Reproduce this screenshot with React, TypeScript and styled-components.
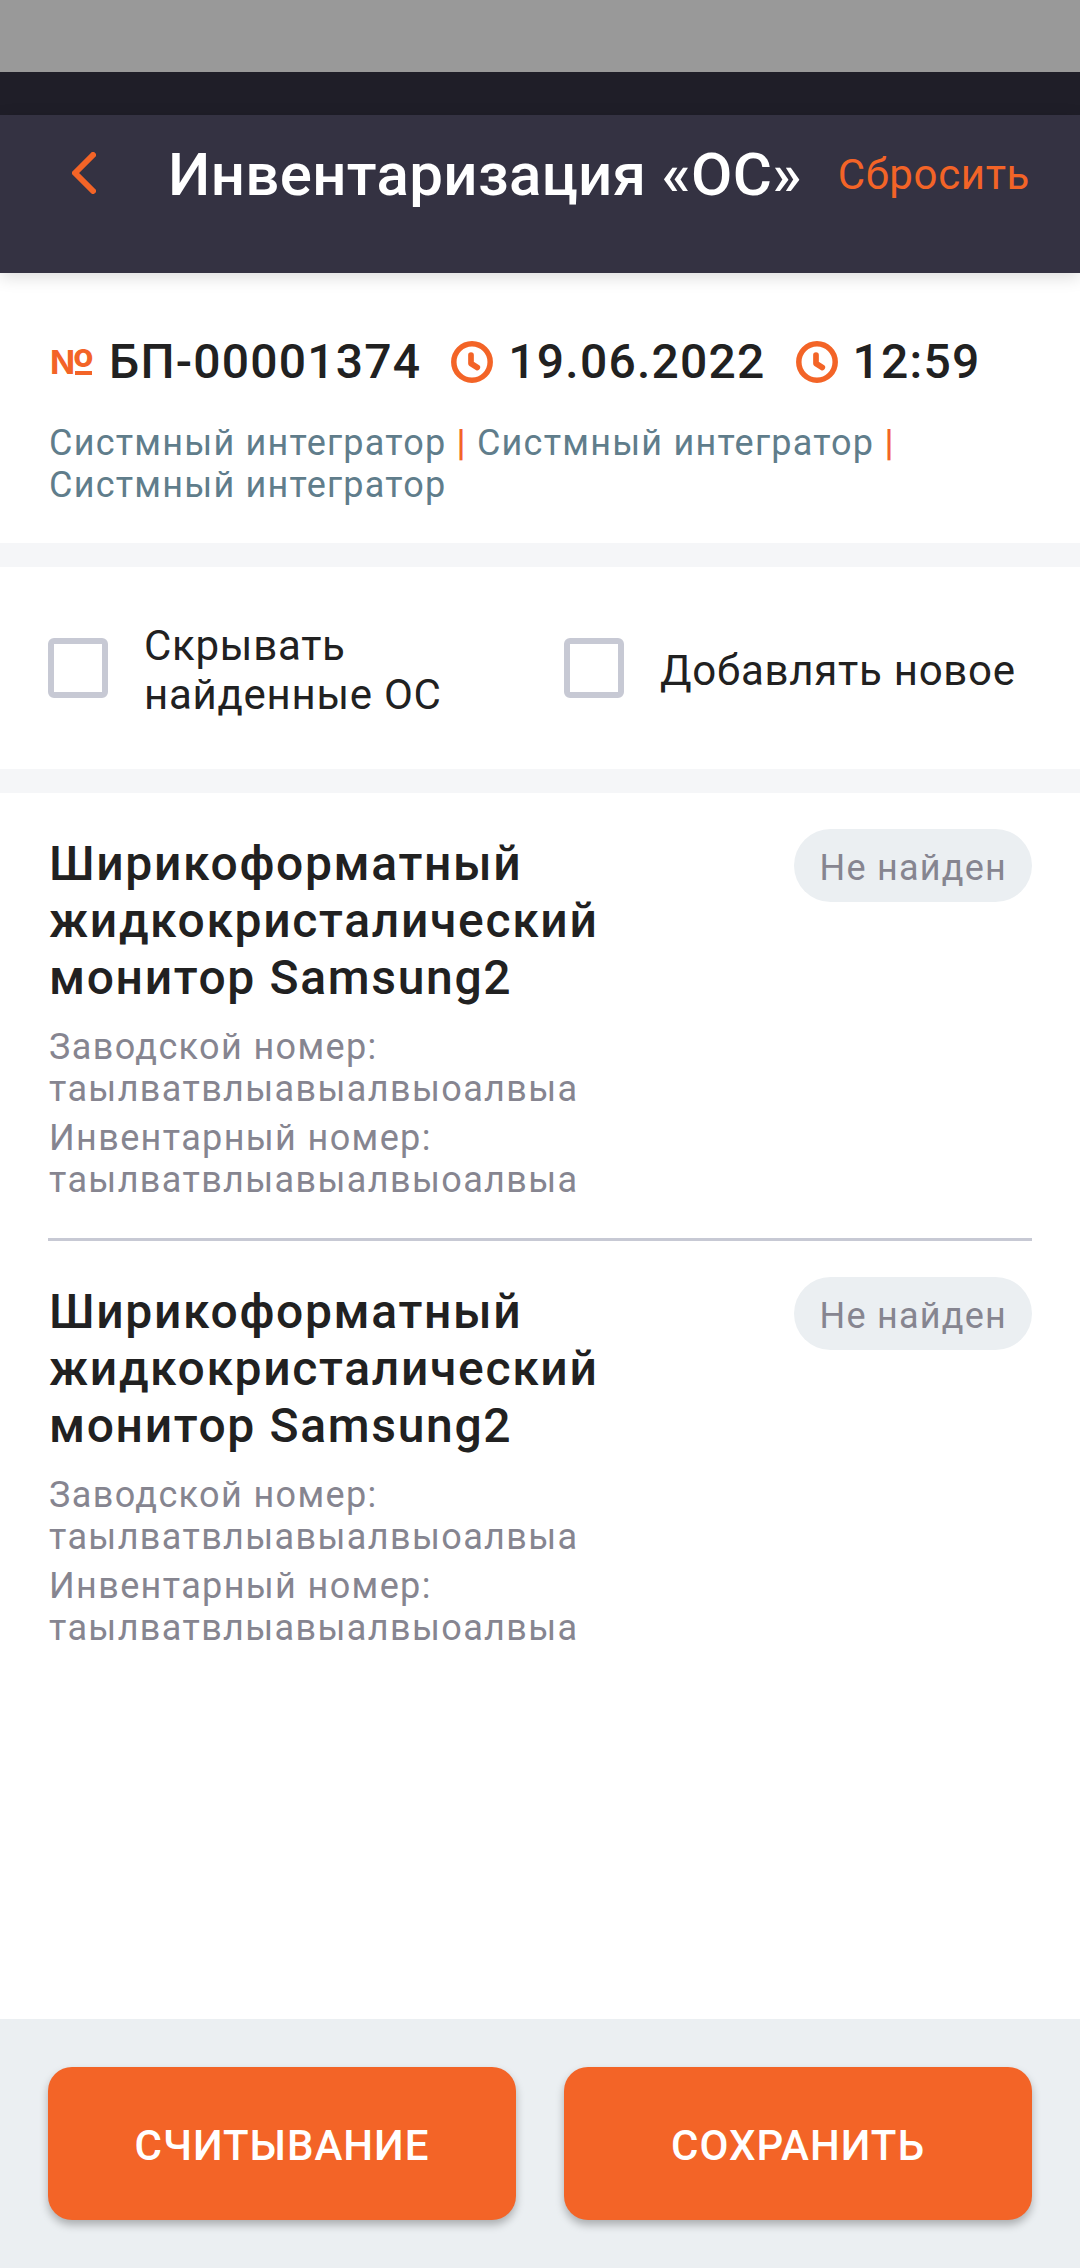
import React from "react";
import styled, { createGlobalStyle } from "styled-components";

const colors = {
  accent: "#f36427",
  ink: "#212121",
  muted: "#868590",
  slate: "#607d8b",
  outline: "#c7c9d4",
  surface: "#ebeff2",
  band: "#f5f6f8",
};

const GlobalStyle = createGlobalStyle`
  * { box-sizing: border-box; }
  body { margin: 0; background: #fff; }
  button { border: 0; padding: 0; background: none; font: inherit; cursor: pointer; }
`;

const Screen = styled.div`
  width: 1080px;
  height: 2268px;
  display: flex;
  flex-direction: column;
  overflow: hidden;
  background: #fff;
  font-family: Roboto, sans-serif;
  color: ${colors.ink};
`;

const SystemBar = styled.div`
  flex: none;
  height: 72px;
  background: #999;
`;

const HeaderShade = styled.div`
  flex: none;
  height: 43px;
  background: #1f1e28;
`;

const Header = styled.header`
  flex: none;
  height: 158px;
  padding: 24px 50px 0 72px;
  display: flex;
  align-items: flex-start;
  background: #343242;
  box-shadow: 0 4px 16px rgba(0, 0, 0, 0.14);
`;

const BackButton = styled.button`
  width: 24px;
  height: 42px;
  margin-top: 13px;
  svg { display: block; }
`;

const Title = styled.h1`
  margin: 0 0 0 72px;
  flex: 1;
  font-size: 60px;
  font-weight: 500;
  line-height: 72px;
  letter-spacing: 0.35px;
  color: #fff;
  white-space: nowrap;
`;

const ResetButton = styled.button`
  && { font-size: 42px; }
  line-height: 50px;
  margin-top: 11px;
  letter-spacing: 0.65px;
  color: ${colors.accent};
`;

const Summary = styled.section`
  flex: none;
  height: 270px;
  padding: 61px 48px 0;
`;

const Facts = styled.div`
  display: flex;
  align-items: center;
  height: 56px;
`;

const Fact = styled.div<{ $gap: number; $after: number }>`
  display: flex;
  align-items: center;
  gap: ${(p) => p.$gap}px;
  margin-right: ${(p) => p.$after}px;
  font-size: 48px;
  font-weight: 500;
  line-height: 56px;
  letter-spacing: 1.23px;
  white-space: nowrap;
  svg { display: block; flex: none; }
`;

const NumberSign = styled.span`
  flex: none;
  display: flex;
  align-items: flex-start;
  width: 45px;
  height: 25px;
  padding-left: 2px;
  font-family: Inter, Roboto, sans-serif;
  font-size: 33px;
  font-weight: 700;
  line-height: 25px;
  letter-spacing: 0;
  color: ${colors.accent};
`;

const Ordinal = styled.span`
  display: flex;
  flex-direction: column;
  align-items: center;
  justify-content: space-between;
  height: 25px;
  margin-left: -2px;
  line-height: 10px;
  &::after {
    content: "";
    width: 17px;
    height: 4px;
    background: ${colors.accent};
  }
`;

const Roles = styled.p`
  margin: 32px 0 0;
  padding-left: 1px;
  font-size: 36px;
  line-height: 42px;
  letter-spacing: 1.23px;
  color: ${colors.slate};
`;

const Bar = styled.span`
  color: ${colors.accent};
  font-weight: 600;
`;

const Band = styled.div`
  flex: none;
  height: 24px;
  background: ${colors.band};
`;

const Options = styled.section`
  flex: none;
  height: 202px;
  padding: 0 48px 0;
  display: grid;
  grid-template-columns: 516px 1fr;
  align-items: center;
`;

const Option = styled.label`
  display: flex;
  align-items: center;
  gap: 36px;
  font-size: 42px;
  line-height: 49px;
  letter-spacing: 0.73px;
`;

const Box = styled.span`
  flex: none;
  width: 60px;
  height: 60px;
  border: 6px solid ${colors.outline};
  border-radius: 6px;
`;

const OptionText = styled.span<{ $drop: number }>`
  padding-top: ${(p) => p.$drop}px;
`;

const List = styled.main`
  flex: 1;
  padding: 0 48px;
`;

const Item = styled.article`
  height: 445px;
  padding-top: 36px;
  display: flex;
  justify-content: space-between;
  align-items: flex-start;
  & + & {
    border-top: 3px solid ${colors.outline};
    height: 448px;
  }
`;

const ItemBody = styled.div`
  width: 600px;
  padding: 6px 0 0 1px;
`;

const ItemName = styled.h2`
  margin: 0 0 20px;
  font-size: 48px;
  font-weight: 500;
  line-height: 57px;
  letter-spacing: 1.67px;
`;

const Detail = styled.p`
  margin: 0 0 7px;
  font-size: 36px;
  line-height: 42px;
  letter-spacing: 1.37px;
  color: ${colors.muted};
`;

const Badge = styled.span`
  height: 73px;
  padding: 3px 25px 0 26px;
  border-radius: 37px;
  background: ${colors.surface};
  color: ${colors.muted};
  font-size: 36px;
  line-height: 73px;
  letter-spacing: 1.23px;
  white-space: nowrap;
`;

const Footer = styled.footer`
  flex: none;
  height: 249px;
  padding: 48px;
  display: grid;
  grid-template-columns: 1fr 1fr;
  gap: 48px;
  background: ${colors.surface};
`;

const Action = styled.button`
  && {
    height: 153px;
    padding-top: 4px;
    border-radius: 24px;
    background: ${colors.accent};
    font-size: 42px;
    font-weight: 500;
  }
  letter-spacing: 1px;
  color: #fff;
  box-shadow: 0 5px 9px rgba(0, 0, 0, 0.27);
`;

const BackIcon = () => (
  <svg width="24" height="42" viewBox="0 0 24 42" fill="none">
    <path d="M21 3 3 21l18 18" stroke={colors.accent} strokeWidth="6" strokeLinecap="round" strokeLinejoin="round" />
  </svg>
);

const ClockIcon = () => (
  <svg width="42" height="42" viewBox="0 0 42 42" fill="none" stroke={colors.accent}>
    <circle cx="21" cy="21" r="18.200" strokeWidth="5.500" />
    <path d="M20 14v8.500l6.300 4" strokeWidth="5.700" strokeLinecap="round" strokeLinejoin="round" />
  </svg>
);

const items = [1, 2].map((id) => ({
  id,
  name: "Ширикоформатный жидкокристалический монитор Samsung2",
  serial: "таылватвлыавыалвыоалвыа",
  inventory: "таылватвлыавыалвыоалвыа",
  status: "Не найден",
}));

export default function App() {
  return (
    <Screen>
      <GlobalStyle />
      <SystemBar />
      <HeaderShade />
      <Header>
        <BackButton aria-label="Назад">
          <BackIcon />
        </BackButton>
        <Title>Инвентаризация «ОС»</Title>
        <ResetButton>Сбросить</ResetButton>
      </Header>

      <Summary>
        <Facts>
          <Fact $gap={16} $after={30}>
            <NumberSign>
              N<Ordinal>o</Ordinal>
            </NumberSign>
            БП-00001374
          </Fact>
          <Fact $gap={15} $after={30}>
            <ClockIcon />
            19.06.2022
          </Fact>
          <Fact $gap={15} $after={0}>
            <ClockIcon />
            12:59
          </Fact>
        </Facts>
        <Roles>
          Систмный интегратор <Bar>|</Bar> Систмный интегратор <Bar>|</Bar> Систмный интегратор
        </Roles>
      </Summary>

      <Band />
      <Options>
        <Option>
          <Box />
          <OptionText $drop={3}>
            Скрывать
            <br />
            найденные ОС
          </OptionText>
        </Option>
        <Option>
          <Box />
          <OptionText $drop={5}>Добавлять новое</OptionText>
        </Option>
      </Options>
      <Band />

      <List>
        {items.map((item) => (
          <Item key={item.id}>
            <ItemBody>
              <ItemName>{item.name}</ItemName>
              <Detail>
                Заводской номер:
                <br />
                {item.serial}
              </Detail>
              <Detail>
                Инвентарный номер:
                <br />
                {item.inventory}
              </Detail>
            </ItemBody>
            <Badge>{item.status}</Badge>
          </Item>
        ))}
      </List>

      <Footer>
        <Action>СЧИТЫВАНИЕ</Action>
        <Action>СОХРАНИТЬ</Action>
      </Footer>
    </Screen>
  );
}
